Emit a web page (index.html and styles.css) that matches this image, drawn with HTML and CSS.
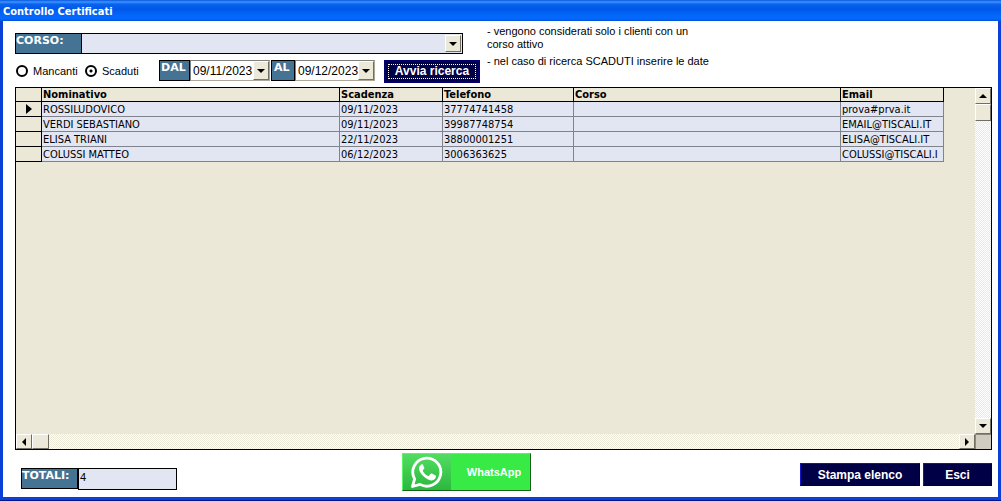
FILE: index.html
```html
<!DOCTYPE html>
<html lang="it">
<head>
<meta charset="utf-8">
<title>Controllo Certificati</title>
<link rel="stylesheet" href="styles.css">
</head>
<body>
<div class="window">
  <header class="titlebar"><h1 class="title">Controllo Certificati</h1></header>
  <main class="client">
    <form class="toolbar">
      <div class="fields">
        <div class="course">
          <label class="tag tag-course" for="corso">CORSO:</label>
          <div class="combo">
            <select class="combo-select" id="corso"><option></option></select>
            <span class="combo-arrow"><i class="arrow down"></i></span>
          </div>
        </div>
        <div class="filters">
          <label class="choice"><input class="radio" type="radio" name="stato">Mancanti</label>
          <label class="choice"><input class="radio" type="radio" name="stato" checked>Scaduti</label>
          <div class="dates">
            <label class="tag tag-from" for="dal">DAL</label>
            <div class="datebox">
              <input class="date" id="dal" type="text" value="09/11/2023">
              <button class="drop" type="button" aria-label="Apri calendario dal"><i class="arrow down"></i></button>
            </div>
            <label class="tag tag-to" for="al">AL</label>
            <div class="datebox">
              <input class="date" id="al" type="text" value="09/12/2023">
              <button class="drop" type="button" aria-label="Apri calendario al"><i class="arrow down"></i></button>
            </div>
          </div>
          <button class="btn btn-search" type="button"><span class="focus">Avvia ricerca</span></button>
        </div>
      </div>
      <div class="notes">
        <p class="note">- vengono considerati solo i clienti con un corso attivo</p>
        <p class="note">- nel caso di ricerca SCADUTI inserire le date</p>
      </div>
    </form>

    <section class="sheet">
      <div class="sheet-view">
        <table class="records">
          <colgroup>
            <col class="col-mark"><col class="col-name"><col class="col-due"><col class="col-phone"><col class="col-course"><col class="col-mail">
          </colgroup>
          <thead>
            <tr><th></th><th>Nominativo</th><th>Scadenza</th><th>Telefono</th><th>Corso</th><th>Email</th></tr>
          </thead>
          <tbody>
            <tr><td class="mark"><i class="arrow current"></i></td><td>ROSSILUDOVICO</td><td>09/11/2023</td><td>37774741458</td><td></td><td>prova#prva.it</td></tr>
            <tr><td class="mark"></td><td>VERDI SEBASTIANO</td><td>09/11/2023</td><td>39987748754</td><td></td><td>EMAIL@TISCALI.IT</td></tr>
            <tr><td class="mark"></td><td>ELISA TRIANI</td><td>22/11/2023</td><td>38800001251</td><td></td><td>ELISA@TISCALI.IT</td></tr>
            <tr><td class="mark"></td><td>COLUSSI MATTEO</td><td>06/12/2023</td><td>3006363625</td><td></td><td>COLUSSI@TISCALI.I</td></tr>
          </tbody>
        </table>
      </div>
      <div class="scroll scroll-v">
        <button class="scroll-btn" type="button" aria-label="Su"><i class="arrow up"></i></button>
        <div class="thumb"></div>
        <button class="scroll-btn scroll-end" type="button" aria-label="Giù"><i class="arrow down"></i></button>
      </div>
      <div class="scroll scroll-h">
        <button class="scroll-btn" type="button" aria-label="Sinistra"><i class="arrow left"></i></button>
        <div class="thumb"></div>
        <button class="scroll-btn scroll-end" type="button" aria-label="Destra"><i class="arrow right"></i></button>
      </div>
      <div class="corner"></div>
    </section>

    <footer class="footer">
      <div class="total">
        <label class="tag tag-total" for="totali">TOTALI:</label>
        <input class="total-value" id="totali" type="text" value="4">
      </div>
      <button class="whatsapp" type="button">
        <span class="wa-badge">
          <svg class="wa-icon" viewBox="0 0 34 34" aria-hidden="true">
            <path d="M2.5 31.5 L4.6 24 A14 14 0 1 1 10 29.4 Z" fill="none" stroke="#fff" stroke-width="2.8" stroke-linejoin="round"/>
            <path d="M12.2 9.2 C11.2 9.2 9 11 9 13.4 C9 16 11 18.6 13 20.8 C15.6 23.5 19 25.6 21.7 25.4 C24 25.2 25.8 23.6 26 21.8 C26.1 20.9 26 20.6 25.2 20.2 L21.9 18.6 C21.2 18.3 20.8 18.5 20.4 19 L19 20.7 C18.6 21.1 18.2 21.1 17.7 20.8 C15.4 19.7 13.9 18 12.9 16.2 C12.6 15.7 12.8 15.4 13.1 15 L14.2 13.6 C14.5 13.2 14.4 12.9 14.2 12.4 L13 9.8 C12.8 9.3 12.6 9.2 12.2 9.2 Z" fill="#fff"/>
          </svg>
        </span>
        <span class="wa-label">WhatsApp</span>
      </button>
      <div class="actions">
        <button class="btn btn-print" type="button">Stampa elenco</button>
        <button class="btn btn-exit" type="button">Esci</button>
      </div>
    </footer>
  </main>
</div>
</body>
</html>
```
FILE: styles.css
```css
* { box-sizing: border-box; }

body {
  margin: 0;
  font-family: "Liberation Sans", Arial, sans-serif;
  font-size: 11px;
  color: #000;
}

button, input, select { font: inherit; color: inherit; margin: 0; padding: 0; border-radius: 0; }

.window {
  display: flex;
  flex-direction: column;
  min-height: 100vh;
  background: #0a3fd8;
  border-bottom: 1px solid #00138c;
}

.titlebar {
  height: 21px;
  padding: 0 3px;
  background: linear-gradient(#0a55dd 0, #3c96ff 2px, #0a62ee 4px, #0058ea 9px, #0468fc 16px, #0468fc 19px, #0050d8 21px);
}

.title {
  margin: 0;
  font: bold 11px/24px "DejaVu Sans Condensed", Tahoma, sans-serif;
  color: #fff;
}

.client {
  flex: 1;
  display: flex;
  flex-direction: column;
  margin: 0 3px 3px;
  padding: 0 6px 0 12px;
  background: #fff;
}

.toolbar { display: flex; gap: 7px; height: 66px; }
.fields { width: 465px; padding-top: 12px; }

.tag {
  background: #457394;
  border: 1px solid #000;
  color: #fff;
  font: bold 11px/14px "DejaVu Sans", Verdana, sans-serif;
  height: 21px;
  white-space: nowrap;
}

.course { display: flex; width: 448px; height: 21px; }
.tag-course { width: 67px; }
.combo { flex: 1; display: flex; position: relative; border: 1px solid #000; border-left: 0; background: #e2e6f2; }
.combo-select { flex: 1; appearance: none; border: 0; background: transparent; padding: 0 18px 0 3px; }
.combo-arrow {
  position: absolute; top: 1px; right: 1px; bottom: 1px; width: 16px;
  display: grid; place-items: center; pointer-events: none;
}
.combo-arrow, .drop, .scroll-btn, .thumb {
  background: #ece9d8;
  border: 1px solid;
  border-color: #fff #716f64 #716f64 #fff;
}

.arrow { display: block; width: 0; height: 0; border: 4px solid transparent; }
.down { border-top-color: #000; border-bottom: 0; }
.up { border-bottom-color: #000; border-top: 0; }
.left { border-right-color: #000; border-left: 0; }
.right { border-left-color: #000; border-right: 0; }
.current { border-width: 5px; border-left: 6px solid #000; border-right: 0; margin-left: 10px; }

.filters { display: flex; align-items: flex-start; height: 24px; margin-top: 6px; padding-left: 1px; }
.choice { display: flex; align-items: center; gap: 5px; width: 69px; height: 21px; }
.radio {
  appearance: none;
  flex: none;
  width: 12px;
  height: 12px;
  border: 2px solid #000;
  border-radius: 50%;
  background: #fff;
}
.radio:checked { background: radial-gradient(circle, #000 1px, #fff 2px); }

.dates { display: flex; margin-left: 5px; }
.tag-from { width: 31px; padding-left: 1px; }
.tag-to { width: 24px; margin-left: 1px; padding-left: 2px; }
.datebox { display: flex; width: 80px; height: 21px; border: 1px solid; border-color: #808080 #aca899 #aca899 #808080; background: #fff; }
.date { flex: 1; min-width: 0; border: 0; padding-left: 2px; background: #fff; font-size: 12px; }
.drop { width: 16px; display: grid; place-items: center; }

.btn {
  height: 23px;
  background: #000046;
  border: 1px solid;
  border-color: #1414a0 #00001e #00001e #1414c8;
  color: #fff;
  font-weight: bold;
  font-size: 12px;
  white-space: nowrap;
}
.btn-search { width: 96px; margin-left: 9px; padding: 2px; border-width: 2px; border-color: #00006e; }
.focus { display: block; border: 1px dotted #fff; line-height: 13px; }

.notes { width: 228px; padding-top: 4px; }
.note { margin: 0 0 4px; line-height: 13px; }

.sheet {
  flex: 1;
  display: grid;
  grid-template-columns: minmax(0, 1fr) 16px;
  grid-template-rows: minmax(0, 1fr) 15px;
  border: 1px solid #000;
  background: #ebe8d8;
}
.sheet-view { overflow: hidden; }

.records {
  width: 928px;
  table-layout: fixed;
  border-collapse: separate;
  border-spacing: 0;
  font: 11px/13px "DejaVu Sans Condensed", Tahoma, sans-serif;
}
.col-mark { width: 26px; }
.col-name { width: 298px; }
.col-due { width: 103px; }
.col-phone { width: 131px; }
.col-course { width: 267px; }
.col-mail { width: 103px; }
.records th, .records td {
  height: 15px;
  padding: 0 0 0 1px;
  overflow: hidden;
  white-space: nowrap;
  text-align: left;
  border: solid #80838c;
  border-width: 0 1px 1px 0;
  background: #e2e6f2;
}
.records th { height: 14px; background: #ebe8d8; border-color: #000; font-weight: bold; }
.records .mark { background: #ebe8d8; border-color: #000; padding: 0; }

.scroll {
  display: flex;
  background: conic-gradient(#fff 25%, #ece9d8 0 50%, #fff 0 75%, #ece9d8 0) 0 0 / 2px 2px;
}
.scroll-v { flex-direction: column; }
.scroll-btn { flex: none; width: 16px; height: 16px; display: grid; place-items: center; }
.scroll-h .scroll-btn { height: 15px; }
.thumb { flex: none; width: 17px; height: 17px; }
.scroll-v .thumb { width: 16px; }
.scroll-h .thumb { height: 15px; }
.scroll-v .scroll-end { margin-top: auto; }
.scroll-h .scroll-end { margin-left: auto; }
.corner { background: #d0cdc0; border: 1px solid #8c897c; border-width: 1px 0 0 1px; }

.footer { display: flex; align-items: flex-start; height: 47px; padding: 3px 0 0 6px; }
.total { display: flex; margin-top: 15px; }
.tag-total { width: 57px; }
.total-value {
  width: 99px;
  height: 22px;
  border: 1px solid #000;
  padding: 0 0 4px 1px;
  background: #e2e6f2;
}

.whatsapp {
  display: flex;
  width: 129px;
  height: 38px;
  margin-left: 225px;
  background: #37ea46;
  border: 1px solid;
  border-color: #5cf56a #14641a #14641a #5cf56a;
  color: #fff;
  font-weight: bold;
}
.wa-badge { width: 48px; height: 36px; display: grid; place-items: center; background: linear-gradient(#52dc62, #2bb83e); }
.wa-icon { width: 34px; height: 34px; }
.wa-label { flex: 1; align-self: center; padding-left: 7px; }

.actions { display: flex; gap: 3px; margin: 10px 0 0 auto; }
.btn-print { width: 120px; }
.btn-exit { width: 69px; }
```
